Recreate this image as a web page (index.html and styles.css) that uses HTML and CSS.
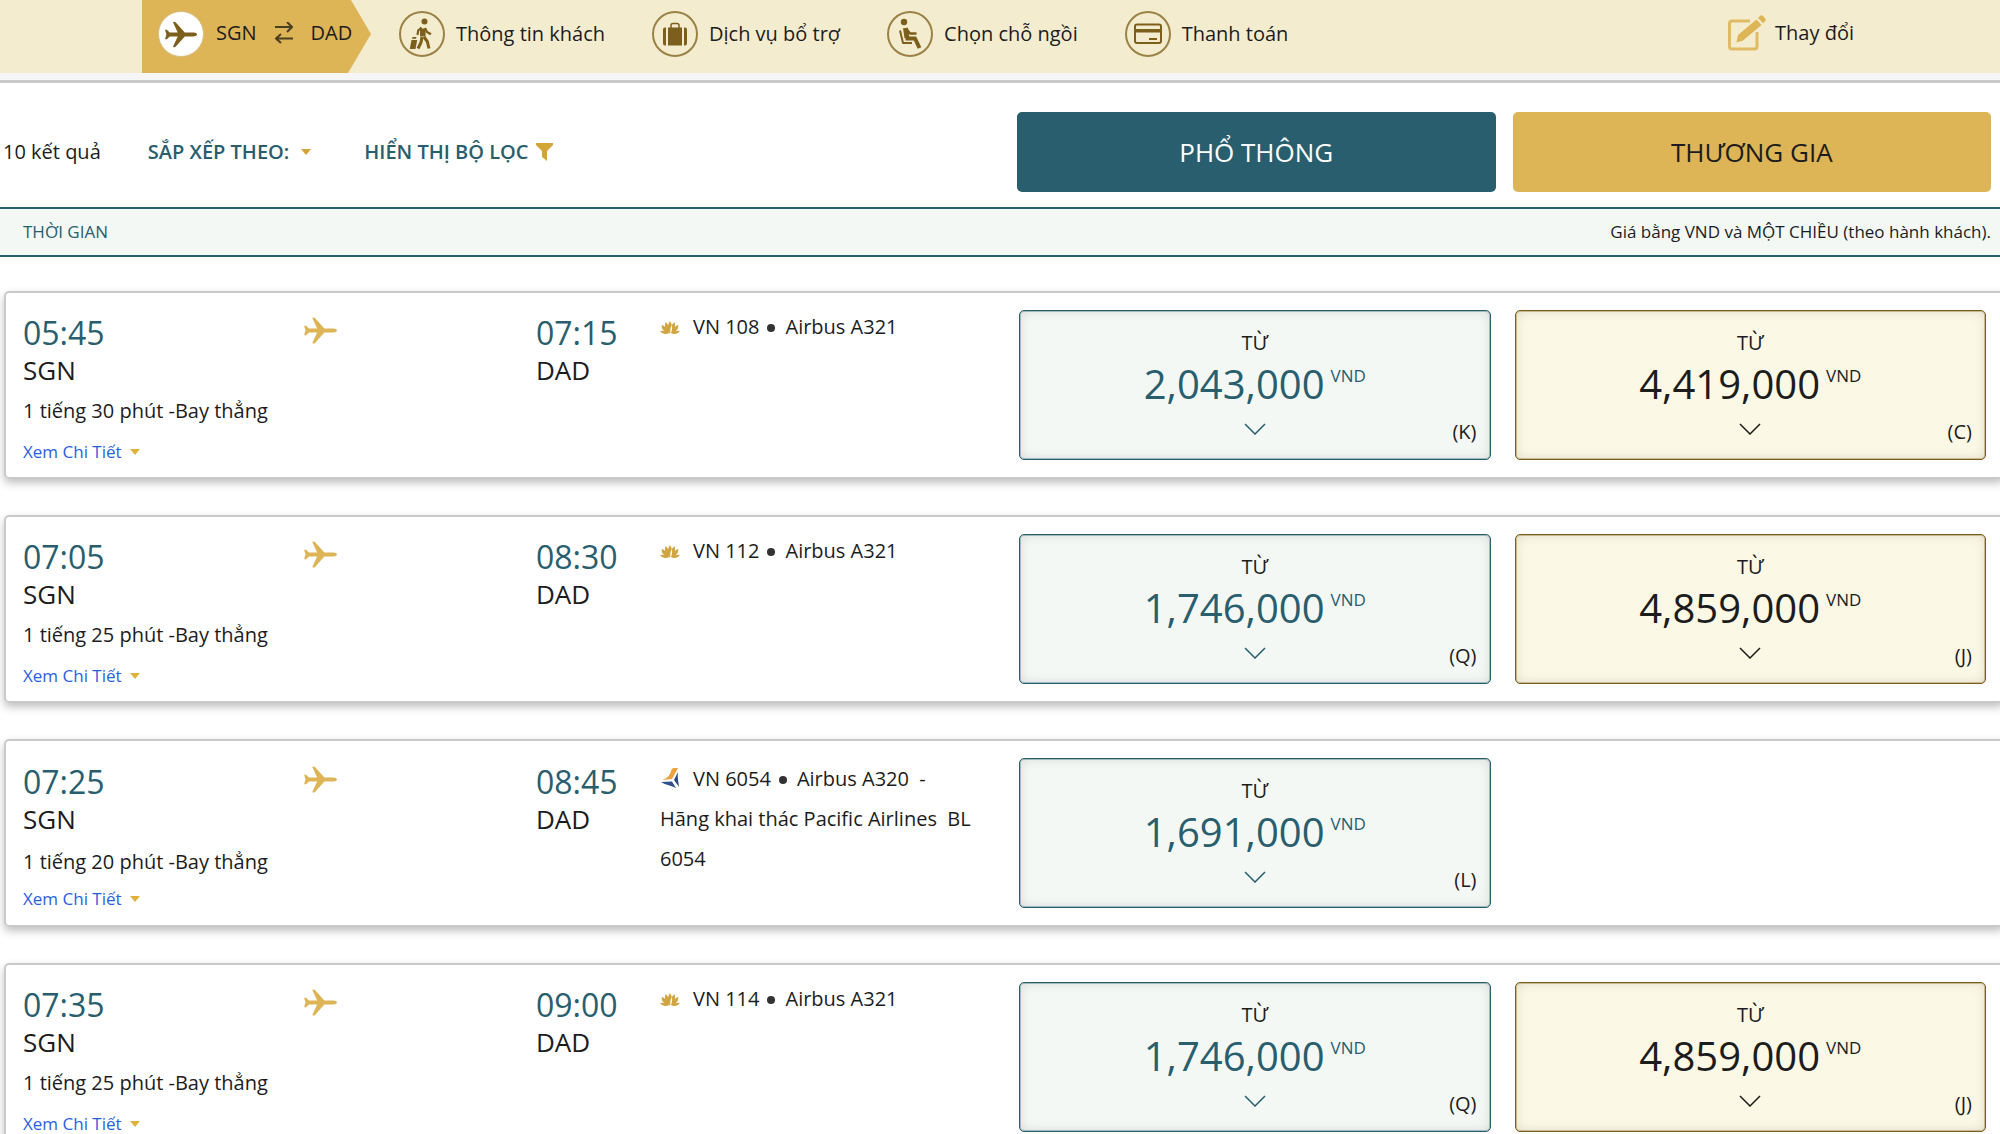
FILE: index.html
```html
<!DOCTYPE html>
<html lang="vi">
<head>
<meta charset="utf-8">
<meta name="viewport" content="width=device-width, initial-scale=1">
<title>Chọn chuyến bay</title>
<link rel="stylesheet" href="styles.css">
</head>
<body>
<svg class="sprite" aria-hidden="true">
  <symbol id="plane" viewBox="0 0 34 28"><path d="M0 9h2l3 3h8.500L8.500 1q1.500-1.300 3 .3L21 12h9.500q3.500.5 3.500 2t-3.500 2H21l-9.500 10.700q-1.500 1.600-3 .3L13.500 16H5l-3 3H0l1.500-5z"/></symbol>
  <symbol id="lotus" viewBox="0 0 20 13"><path d="M10 0q4 6 .8 12H9.200Q6 6 10 0zM5.500 1q5 4 4.200 11.500Q3.500 8 5.500 1zM14.500 1q-5 4-4.200 11.500Q16.500 8 14.500 1zM1.500 4q5.500 1 7 8Q1.500 10.500 1.500 4zM18.500 4q-5.500 1-7 8Q18.500 10.500 18.500 4zM0 10q5-1 9 2.300Q3 14.500 0 10zM20 10q-5-1-9 2.300Q17 14.500 20 10z"/></symbol>
  <symbol id="pacific" viewBox="0 0 18 20"><path fill="#eea23e" d="M13 0h4L11 11 1 12c6-2 8-5 9-9 .6-2 1.500-3 3-3z"/><path fill="#33508c" d="M0 14l11-.6 4 6.600C9 17.500 4 16.500 0 14z"/><path fill="#2c477f" d="M13 12l4-8c-1 5 .5 10 1 15z"/></symbol>
  <symbol id="chevron" viewBox="0 0 22 12"><path d="M1 1l10 10L21 1" fill="none" stroke="currentColor" stroke-width="1.500"/></symbol>
  <symbol id="caret" viewBox="0 0 10 6"><path d="M0 0h10L5 6z"/></symbol>
</svg>

<header class="topbar">
  <nav class="steps" aria-label="Các bước đặt chỗ">
    <a class="step step-current" href="#flights">
      <span class="step-icon"><svg class="glyph-plane"><use href="#plane"/></svg></span>
      <span class="route"><span>SGN</span>
      <svg class="swap" viewBox="0 0 18 22"><path d="M0 5h17M12 0l5 5-5 5M18 16.500H1M6 12l-5 4.500 5 4.500" fill="none" stroke="#4a3f22" stroke-width="2"/></svg>
      <span>DAD</span></span>
    </a>
    <a class="step" href="#passengers">
      <span class="step-icon"><svg class="strokes" viewBox="0 0 46 46"><circle class="solid" cx="25.500" cy="10.500" r="3"/><path d="M23.800 17.500v8" stroke-width="5.500"/><path d="M22.500 16.500l-3.300 3-.7 4.500M26 17l2 4 4 2.300" stroke-width="2.200"/><path d="M23 26l-1 5.500-3 6M25 26l3.300 4.500 1.700 7" stroke-width="3"/><path class="solid" d="M12.500 29h5.700l-1.700 9h-5.700zM13.500 26h4l-.5 1.800h-4z"/></svg></span>
      <span>Thông tin khách</span>
    </a>
    <a class="step" href="#services">
      <span class="step-icon"><svg class="strokes" viewBox="0 0 46 46"><path class="solid" d="M16 16.500h14v18H16zM32 16.500h1q2 0 2 2v14q0 2-2 2h-1zM14 16.500h-1q-2 0-2 2v14q0 2 2 2h1z"/><path d="M19 17v-2.500q0-2 2-2h4q2 0 2 2V17" stroke-width="1.500"/></svg></span>
      <span>Dịch vụ bổ trợ</span>
    </a>
    <a class="step" href="#seats">
      <span class="step-icon"><svg class="strokes" viewBox="0 0 46 46"><circle class="solid" cx="17" cy="11" r="3.200"/><path d="M18.500 17l1.500 10" stroke-width="5"/><path d="M19 17.500l4 5h6.500" stroke-width="2.500"/><path d="M18.500 27.500h9.500l4.500 9.500" stroke-width="4"/><path d="M13 19.500l3 12.500h9" stroke-width="2"/></svg></span>
      <span>Chọn chỗ ngồi</span>
    </a>
    <a class="step" href="#payment">
      <span class="step-icon"><svg class="strokes" viewBox="0 0 46 46"><rect x="10" y="13.500" width="26" height="18.500" rx="2" stroke-width="2"/><path class="solid" d="M10 18h26v3.500H10zM24 27h8v2h-8z"/></svg></span>
      <span>Thanh toán</span>
    </a>
  </nav>
  <a class="change" href="#change">
    <svg class="change-icon" viewBox="0 0 38 36"><path d="M22 6H4Q1.500 6 1.500 8.500v23Q1.500 34 4 34h22.500Q29 34 29 31.500V17" fill="none" stroke="#e0bb66" stroke-width="3"/><path d="M10 20L28.500 4.500l5 5.500L15 25.500 8.500 27.500zM30 3l2-2q1.500-1.500 3 0l2.200 2.500q1.200 1.500-.2 2.800l-2 2z"/></svg>
    <span>Thay đổi</span>
  </a>
</header>

<main id="flights">
  <div class="toolbar">
    <div class="tools">
      <span class="count">10 kết quả</span>
      <button class="tool" type="button">SẮP XẾP THEO:<svg class="caret"><use href="#caret"/></svg></button>
      <button class="tool tool-filter" type="button">HIỂN THỊ BỘ LỌC<svg class="funnel" viewBox="0 0 17 18"><path d="M0 0h17v2l-6 6v10l-5-4V8L0 2z"/></svg></button>
    </div>
    <div class="cabins">
      <button class="cabin cabin-economy" type="button">PHỔ THÔNG</button>
      <button class="cabin cabin-business" type="button">THƯƠNG GIA</button>
    </div>
  </div>
  <div class="listhead"><span class="listhead-time">THỜI GIAN</span><span>Giá bằng VND và MỘT CHIỀU (theo hành khách).</span></div>

  <div class="flights">
    <article class="flight">
      <div class="itinerary">
        <div><div class="time">05:45</div><div class="airport">SGN</div></div>
        <svg class="plane"><use href="#plane"/></svg>
        <div><div class="time">07:15</div><div class="airport">DAD</div></div>
        <div class="duration">1 tiếng 30 phút -Bay thẳng</div>
        <a class="details" href="#vn108">Xem Chi Tiết<svg class="caret"><use href="#caret"/></svg></a>
      </div>
      <div class="info"><svg class="carrier"><use href="#lotus"/></svg>VN 108<i class="dot"></i>Airbus A321</div>
      <div class="fares">
        <button class="fare" type="button"><span>TỪ</span><span class="price">2,043,000<span class="currency">VND</span></span><svg class="chevron"><use href="#chevron"/></svg><span class="class">(K)</span></button>
        <button class="fare fare-business" type="button"><span>TỪ</span><span class="price">4,419,000<span class="currency">VND</span></span><svg class="chevron"><use href="#chevron"/></svg><span class="class">(C)</span></button>
      </div>
    </article>

    <article class="flight">
      <div class="itinerary">
        <div><div class="time">07:05</div><div class="airport">SGN</div></div>
        <svg class="plane"><use href="#plane"/></svg>
        <div><div class="time">08:30</div><div class="airport">DAD</div></div>
        <div class="duration">1 tiếng 25 phút -Bay thẳng</div>
        <a class="details" href="#vn112">Xem Chi Tiết<svg class="caret"><use href="#caret"/></svg></a>
      </div>
      <div class="info"><svg class="carrier"><use href="#lotus"/></svg>VN 112<i class="dot"></i>Airbus A321</div>
      <div class="fares">
        <button class="fare" type="button"><span>TỪ</span><span class="price">1,746,000<span class="currency">VND</span></span><svg class="chevron"><use href="#chevron"/></svg><span class="class">(Q)</span></button>
        <button class="fare fare-business" type="button"><span>TỪ</span><span class="price">4,859,000<span class="currency">VND</span></span><svg class="chevron"><use href="#chevron"/></svg><span class="class">(J)</span></button>
      </div>
    </article>

    <article class="flight flight-codeshare">
      <div class="itinerary">
        <div><div class="time">07:25</div><div class="airport">SGN</div></div>
        <svg class="plane"><use href="#plane"/></svg>
        <div><div class="time">08:45</div><div class="airport">DAD</div></div>
        <div class="duration">1 tiếng 20 phút -Bay thẳng</div>
        <a class="details" href="#vn6054">Xem Chi Tiết<svg class="caret"><use href="#caret"/></svg></a>
      </div>
      <div class="info"><svg class="carrier carrier-pacific"><use href="#pacific"/></svg>VN 6054<i class="dot"></i>Airbus A320 &nbsp;-<div>Hãng khai thác Pacific Airlines &nbsp;BL 6054</div></div>
      <div class="fares">
        <button class="fare" type="button"><span>TỪ</span><span class="price">1,691,000<span class="currency">VND</span></span><svg class="chevron"><use href="#chevron"/></svg><span class="class">(L)</span></button>
      </div>
    </article>

    <article class="flight">
      <div class="itinerary">
        <div><div class="time">07:35</div><div class="airport">SGN</div></div>
        <svg class="plane"><use href="#plane"/></svg>
        <div><div class="time">09:00</div><div class="airport">DAD</div></div>
        <div class="duration">1 tiếng 25 phút -Bay thẳng</div>
        <a class="details" href="#vn114">Xem Chi Tiết<svg class="caret"><use href="#caret"/></svg></a>
      </div>
      <div class="info"><svg class="carrier"><use href="#lotus"/></svg>VN 114<i class="dot"></i>Airbus A321</div>
      <div class="fares">
        <button class="fare" type="button"><span>TỪ</span><span class="price">1,746,000<span class="currency">VND</span></span><svg class="chevron"><use href="#chevron"/></svg><span class="class">(Q)</span></button>
        <button class="fare fare-business" type="button"><span>TỪ</span><span class="price">4,859,000<span class="currency">VND</span></span><svg class="chevron"><use href="#chevron"/></svg><span class="class">(J)</span></button>
      </div>
    </article>
  </div>
</main>
</body>
</html>
```
FILE: styles.css
```css
:root {
  --teal: #285e6d;
  --gold: #ddb456;
  --brown: #7c5f1c;
  --ink: #1c1c1c;
}
* { box-sizing: border-box; }
html { scrollbar-width: none; }
body {
  margin: 0;
  overflow-x: hidden;
  background: #fff;
  color: var(--ink);
  font: 20px/28px "Open Sans", "Noto Sans", sans-serif;
}
button {
  margin: 0;
  padding: 0;
  border: 0;
  background: none;
  color: inherit;
  font: inherit;
  cursor: pointer;
}
a { color: inherit; text-decoration: none; }
svg { flex: none; fill: currentColor; }
.sprite { position: absolute; width: 0; height: 0; }

/* Booking steps */
.topbar {
  display: flex;
  justify-content: space-between;
  padding: 0 146px 0 142px;
  background: #f4eccf;
  border-bottom: 3px solid #c9c9c9;
  box-shadow: inset 0 -7px #f6f6f6;
}
.steps { display: flex; gap: 47px; margin-bottom: 7px; }
.step { display: flex; align-items: center; gap: 11px; height: 73px; padding-bottom: 5px; white-space: nowrap; }
.step-icon {
  display: flex;
  align-items: center;
  justify-content: center;
  width: 46px;
  height: 46px;
  border: 2px solid #9a8247;
  border-radius: 50%;
  color: var(--brown);
}
.step-icon svg { width: 46px; height: 46px; }
.strokes { fill: none; stroke: currentColor; stroke-linejoin: round; }
.strokes .solid { fill: currentColor; stroke: none; }
.step-current {
  gap: 12px;
  width: 229px;
  margin-right: -19px;
  padding-left: 16px;
  background: var(--gold);
  clip-path: polygon(0 0, 209px 0, 100% 34px, 206px 100%, 0 100%);
}
.step-current .step-icon { background: #fff; border: 1px solid #d5c089; }
.step-icon .glyph-plane { width: 32px; height: 27px; }
.route { display: flex; align-items: center; gap: 18px; padding-bottom: 3px; }
.swap { width: 18px; height: 22px; }
.change { display: flex; align-items: center; gap: 9px; height: 73px; padding-bottom: 7px; }
.change-icon { width: 38px; height: 36px; color: var(--gold); }

/* Result tools */
.toolbar {
  display: grid;
  grid-template-columns: minmax(0, 1014fr) minmax(0, 974fr);
  align-items: center;
  padding: 29px 9px 15px 3px;
}
.tools { display: flex; align-items: center; white-space: nowrap; }
.tool { display: flex; align-items: center; margin-left: 47px; color: var(--teal); font-weight: 600; }
.tool .caret { margin-left: 12px; color: #d3a537; }
.tool-filter { margin-left: 53px; }
.caret { width: 10px; height: 6px; color: #e0b23c; }
.funnel { width: 17px; height: 18px; margin-left: 8px; color: #d3a537; }
.cabins { display: grid; grid-template-columns: 1fr 1fr; gap: 17px; }
.cabin { height: 80px; border-radius: 5px; font-size: 26px; }
.cabin-economy { background: var(--teal); color: #fff; }
.cabin-business { background: var(--gold); }
.listhead {
  display: flex;
  justify-content: space-between;
  padding: 9px 9px 9px 23px;
  border: 2px solid var(--teal);
  border-width: 2px 0;
  background: #f4f8f5;
  font-size: 17px;
}
.listhead-time { color: var(--teal); }

/* Flight cards */
.flights { display: grid; gap: 36px; margin: 34px -4px 36px 4px; }
.flight {
  display: grid;
  grid-template-columns: minmax(0, 637fr) minmax(0, 359fr) minmax(0, 967fr);
  padding: 17px 16px 17px 17px;
  border: 2px solid #c9c9c9;
  border-radius: 5px;
  box-shadow: 0 4px 8px rgba(0, 0, 0, .25);
}
.itinerary {
  display: grid;
  grid-template-columns: 281fr 232fr 124fr;
  grid-template-rows: 78px 50px 22px;
  align-items: start;
}
.time { color: var(--teal); font-size: 32px; line-height: 46px; }
.airport { font-size: 26px; line-height: 28px; }
.plane { width: 33px; height: 27px; margin-top: 7px; color: var(--gold); }
.duration, .details { grid-column: 1 / -1; }
.duration { padding-top: 9px; }
.details { display: flex; align-items: center; gap: 8px; color: #2b5fe0; font-size: 17px; }
.info { padding-right: 42px; line-height: 34px; }
.carrier { width: 20px; height: 13px; margin-right: 13px; color: #d0a440; }
.carrier-pacific { height: 20px; vertical-align: -2px; }
.dot {
  display: inline-block;
  width: 8px;
  height: 8px;
  margin: 0 10px 2px 8px;
  border-radius: 50%;
  background: #333;
}
.flight-codeshare .info { padding-top: 1px; line-height: 40px; }
.flight-codeshare .itinerary { grid-template-rows: 80px 46px 22px; padding-top: 1px; }
.fares { display: grid; grid-template-columns: 1fr 1fr; gap: 24px; }
.fare {
  position: relative;
  display: flex;
  flex-direction: column;
  align-items: center;
  height: 150px;
  padding-top: 18px;
  border: 1px solid var(--teal);
  border-radius: 5px;
  background: #f4f8f5;
  box-shadow: inset 0 0 0 1px rgba(40, 94, 109, .35), inset 0 0 12px rgba(0, 0, 0, .12);
}
.price { display: flex; color: var(--teal); font-size: 40px; line-height: 54px; }
.currency { margin-left: 6px; font-size: 17px; line-height: 38px; }
.chevron { width: 22px; height: 12px; margin-top: 12px; color: var(--teal); }
.class { position: absolute; right: 13px; bottom: 13px; }
.fare-business {
  border-color: var(--brown);
  background: #fbf8e5;
  box-shadow: inset 0 0 0 1px rgba(124, 95, 28, .35), inset 0 0 12px rgba(0, 0, 0, .12);
}
.fare-business .price, .fare-business .chevron { color: var(--ink); }
```
